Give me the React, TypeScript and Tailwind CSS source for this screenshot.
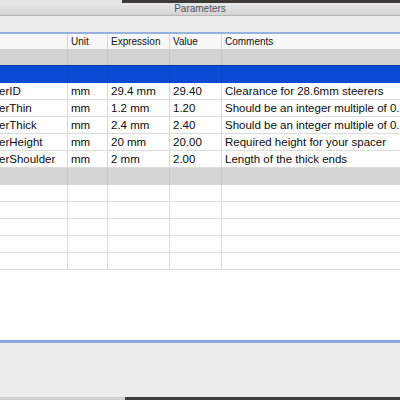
import React from "react";

type Param = { name: string; unit: string; expr: string; value: string; comment: string };

const PARAMS: Param[] = [
  { name: "erID", unit: "mm", expr: "29.4 mm", value: "29.40", comment: "Clearance for 28.6mm steerers" },
  { name: "erThin", unit: "mm", expr: "1.2 mm", value: "1.20", comment: "Should be an integer multiple of 0.2 mm" },
  { name: "erThick", unit: "mm", expr: "2.4 mm", value: "2.40", comment: "Should be an integer multiple of 0.2 mm" },
  { name: "erHeight", unit: "mm", expr: "20 mm", value: "20.00", comment: "Required height for your spacer" },
  { name: "erShoulder", unit: "mm", expr: "2 mm", value: "2.00", comment: "Length of the thick ends" },
];

const COLS = "grid grid-cols-[67px_40px_62px_52px_1fr]";

function Row({
  cells,
  className,
  lineClass,
}: {
  cells: string[];
  className: string;
  lineClass: string;
}) {
  return (
    <div className={`${COLS} ${className}`}>
      {cells.map((c, i) => (
        <div
          key={i}
          className={
            i === 0
              ? "overflow-hidden whitespace-nowrap -ml-[1px]"
              : `overflow-hidden whitespace-nowrap pl-[3px] border-l ${lineClass}`
          }
        >
          {c}
        </div>
      ))}
    </div>
  );
}

export default function App() {
  const blank = ["", "", "", "", ""];
  return (
    <div className="w-[400px] h-[400px] overflow-hidden flex flex-col bg-white font-['Liberation_Sans',Arial,sans-serif] text-[11.5px] text-[#0d0d0d]">
      {/* window behind */}
      <div className="flex h-[3px] shrink-0">
        <div className="w-[122px] bg-[#e6e6e6]" />
        <div className="flex-1 bg-[#3b3a36]" />
      </div>

      {/* title bar */}
      <div className="h-[13px] shrink-0 bg-gradient-to-b from-[#e8e8e8] to-[#d4d4d4] border-b border-[#b4b4b4] text-center text-[10px] leading-[12px] text-[#505050]">
        Parameters
      </div>

      {/* toolbar */}
      <div className="h-[16px] shrink-0 bg-[#ececec]" />
      <div className="h-[2px] shrink-0 bg-[#94b1df]" />

      {/* header */}
      <Row
        cells={["", "Unit", "Expression", "Value", "Comments"]}
        className="h-[16px] shrink-0 bg-[#f7f7f7] border-b border-[#cdcdcd] text-[10px] leading-[15px] text-[#111]"
        lineClass="border-[#d6d6d6]"
      />
      <Row cells={blank} className="h-[15px] shrink-0 bg-[#d3d3d3]" lineClass="border-[#c2c2c2]" />
      <Row
        cells={blank}
        className="h-[18px] shrink-0 bg-[#0a4bd3] border-t border-[#0638a6]"
        lineClass="border-[#0a45c2]"
      />

      {PARAMS.map((p) => (
        <Row
          key={p.name}
          cells={[p.name, p.unit, p.expr, p.value, p.comment]}
          className="h-[17px] shrink-0 border-b border-[#dcdcdc] leading-[16px]"
          lineClass="border-[#d8d8d8]"
        />
      ))}

      <Row cells={blank} className="h-[17px] shrink-0 bg-[#d5d5d5]" lineClass="border-[#c4c4c4]" />

      {[0, 1, 2, 3, 4].map((i) => (
        <Row
          key={i}
          cells={blank}
          className="h-[17px] shrink-0 border-b border-[#dedede]"
          lineClass="border-[#dcdcdc]"
        />
      ))}

      <div className="flex-1" />

      {/* footer */}
      <div className="h-[57px] shrink-0 bg-[#ececec] border-t-[3px] border-[#8aa8da]" />
      <div className="flex h-[3px] shrink-0">
        <div className="w-[125px] bg-[#cfcfcf]" />
        <div className="flex-1 bg-[#3c3c3c]" />
      </div>
    </div>
  );
}
